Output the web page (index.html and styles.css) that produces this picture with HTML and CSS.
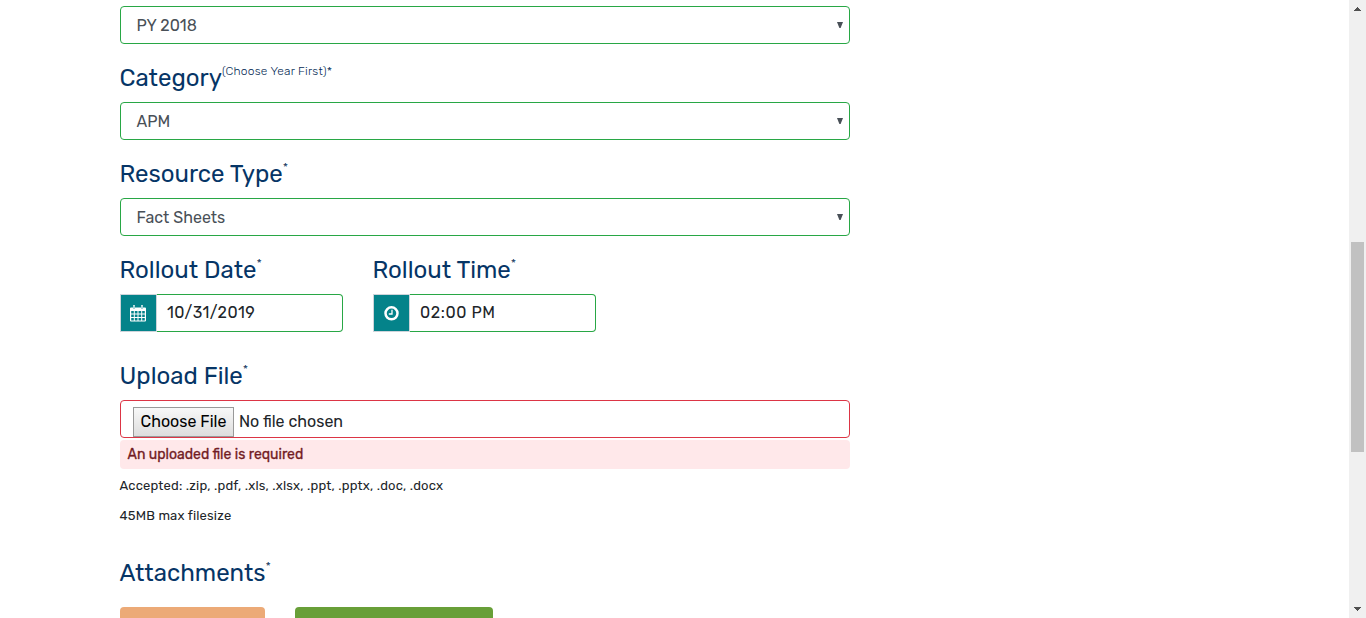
FILE: index.html
```html
<!DOCTYPE html>
<html lang="en">
<head>
<meta charset="utf-8">
<title>Resource Upload</title>
<link rel="stylesheet" href="styles.css">
</head>
<body>
<main class="page">
  <form class="form">
    <div class="field select"><span>PY 2018</span><svg class="caret" width="6" height="6" viewBox="0 0 6 6"><path d="M0 0h6L3.600 6H2.400z"/></svg></div>
    <h4 class="label">Category<sup>(Choose Year First)*</sup></h4>
    <div class="field select"><span>APM</span><svg class="caret" width="6" height="6" viewBox="0 0 6 6"><path d="M0 0h6L3.600 6H2.400z"/></svg></div>
    <h4 class="label">Resource Type<sup>*</sup></h4>
    <div class="field select"><span>Fact Sheets</span><svg class="caret" width="6" height="6" viewBox="0 0 6 6"><path d="M0 0h6L3.600 6H2.400z"/></svg></div>
    <div class="schedule">
      <div class="column">
        <h4 class="label">Rollout Date<sup>*</sup></h4>
        <div class="group">
          <span class="addon"><svg width="16" height="17" viewBox="0 0 16 17"><path fill="#fff" fill-rule="evenodd" d="M1 2.500h2V1.200Q3 0 4 0t1 1.200v1.300h6V1.200Q11 0 12 0t1 1.200v1.300h2q1 0 1 1v12q0 1-1 1H1q-1 0-1-1v-12q0-1 1-1zM1.200 6v2.500h2.600V6zm3.600 0v2.500h2.700V6zm3.700 0v2.500h2.700V6zm3.700 0v2.500h2.600V6zM1.200 9.500V12h2.600V9.500zm3.600 0V12h2.700V9.500zm3.700 0V12h2.700V9.500zm3.700 0V12h2.600V9.500zM1.200 13v2.500h2.600V13zm3.600 0v2.500h2.700V13zm3.700 0v2.500h2.700V13zm3.700 0v2.500h2.600V13z"/><path stroke="#04838a" stroke-width=".7" d="M4 1v3M12 1v3"/></svg></span>
          <span class="value date">10/31/2019</span>
        </div>
      </div>
      <div class="column">
        <h4 class="label">Rollout Time<sup>*</sup></h4>
        <div class="group">
          <span class="addon"><svg width="17" height="16" viewBox="0 0 17 16" fill="none" stroke="#fff"><circle cx="8.500" cy="8.300" r="6" stroke-width="2.500"/><path stroke-width="1.300" d="M9 4.800v4.200H5.800"/></svg></span>
          <span class="value time">02:00 PM</span>
        </div>
      </div>
    </div>
    <h4 class="label upload">Upload File<sup>*</sup></h4>
    <div class="field file"><span class="choose">Choose File</span><span>No file chosen</span></div>
    <div class="error">An uploaded file is required</div>
    <p class="note">Accepted: .zip, .pdf, .xls, .xlsx, .ppt, .pptx, .doc, .docx</p>
    <p class="note">45MB max filesize</p>
    <h4 class="label attachments">Attachments<sup>*</sup></h4>
    <div class="actions"><span class="btn orange"></span><span class="btn green"></span></div>
  </form>
</main>
<div class="scrollbar">
  <svg class="arrow" width="7" height="4" viewBox="0 0 7 4"><path d="M0 4V3h1V2h1V1h1V0h1v1h1v1h1v1h1v1z"/></svg>
  <div class="thumb"></div>
  <svg class="arrow down" width="7" height="4" viewBox="0 0 7 4"><path d="M0 0v1h1v1h1v1h1v1h1V3h1V2h1V1h1V0z"/></svg>
</div>
</body>
</html>
```
FILE: styles.css
```css
* { box-sizing: border-box; }
body {
  margin: 0;
  height: 618px;
  display: flex;
  overflow: hidden;
  background: #fff;
  color: #212529;
  font: 400 16px/24px Rubik, Roboto, sans-serif;
  white-space: nowrap;
}
.page { flex: 1; padding: 6px 0 0 120px; }
.form { width: 730px; }
.field {
  height: 38px;
  display: flex;
  align-items: center;
  border: 1px solid #28a745;
  border-radius: 4px;
}
.select { justify-content: space-between; padding: 0 6px 0 15.5px; color: #495057; }
.select span { padding-top: 2px; }
.caret { fill: #495057; }
.label {
  height: 58px;
  margin: 0 0 0 -.5px;
  padding-top: 20px;
  color: #063566;
  font-size: 24px;
  font-weight: 400;
  line-height: 28px;
}
sup {
  color: #062b55;
  font-size: 12px;
  font-weight: 300;
  line-height: 0;
  letter-spacing: .2px;
  vertical-align: 11px;
}
.schedule { display: flex; gap: 30px; }
.column { width: 223px; }
.group { display: flex; height: 38px; }
.addon {
  width: 37px;
  display: flex;
  align-items: center;
  padding-left: 9px;
  background: #04838a;
  border: 1px solid #ced4da;
}
.value {
  flex: 1;
  padding: 6px 10px;
  border: 1px solid #28a745;
  border-left: 0;
  border-radius: 0 4px 4px 0;
}
.date { letter-spacing: .42px; }
.time { letter-spacing: .6px; }
.upload { height: 68px; padding-top: 30px; }
.file { border-color: #dc3545; padding: 6px 0 0 12px; gap: 5px; }
.choose {
  width: 101px;
  height: 30px;
  padding: 2px 6.5px;
  border: 1px solid #999;
  background: linear-gradient(#f8f8f8, #ddd);
  color: #000;
}
.error {
  height: 29px;
  margin: 2px 0 1px;
  padding: 0 7.500px;
  border-radius: 4px;
  background: #ffe8ea;
  color: #721c24;
  font-size: 14px;
  -webkit-text-stroke: .3px;
  line-height: 29px;
}
.note {
  height: 30px;
  margin: 0 0 0 -.5px;
  padding-top: 1px;
  font-size: 13px;
  line-height: 30px;
  letter-spacing: .18px;
}
.attachments { height: 77px; padding-top: 29px; }
.actions { display: flex; gap: 30px; }
.btn { height: 38px; border-radius: 4px; }
.orange { width: 145px; background: #ecaa77; }
.green { width: 198px; background: #689f38; }
.scrollbar {
  width: 17px;
  background: #f0f0f0;
  display: flex;
  flex-direction: column;
  align-items: center;
  padding: 7px 0;
}
.arrow { fill: #505050; }
.thumb { width: 13px; height: 210px; margin-top: 231px; background: #c1c1c1; }
.down { margin-top: auto; }
```
